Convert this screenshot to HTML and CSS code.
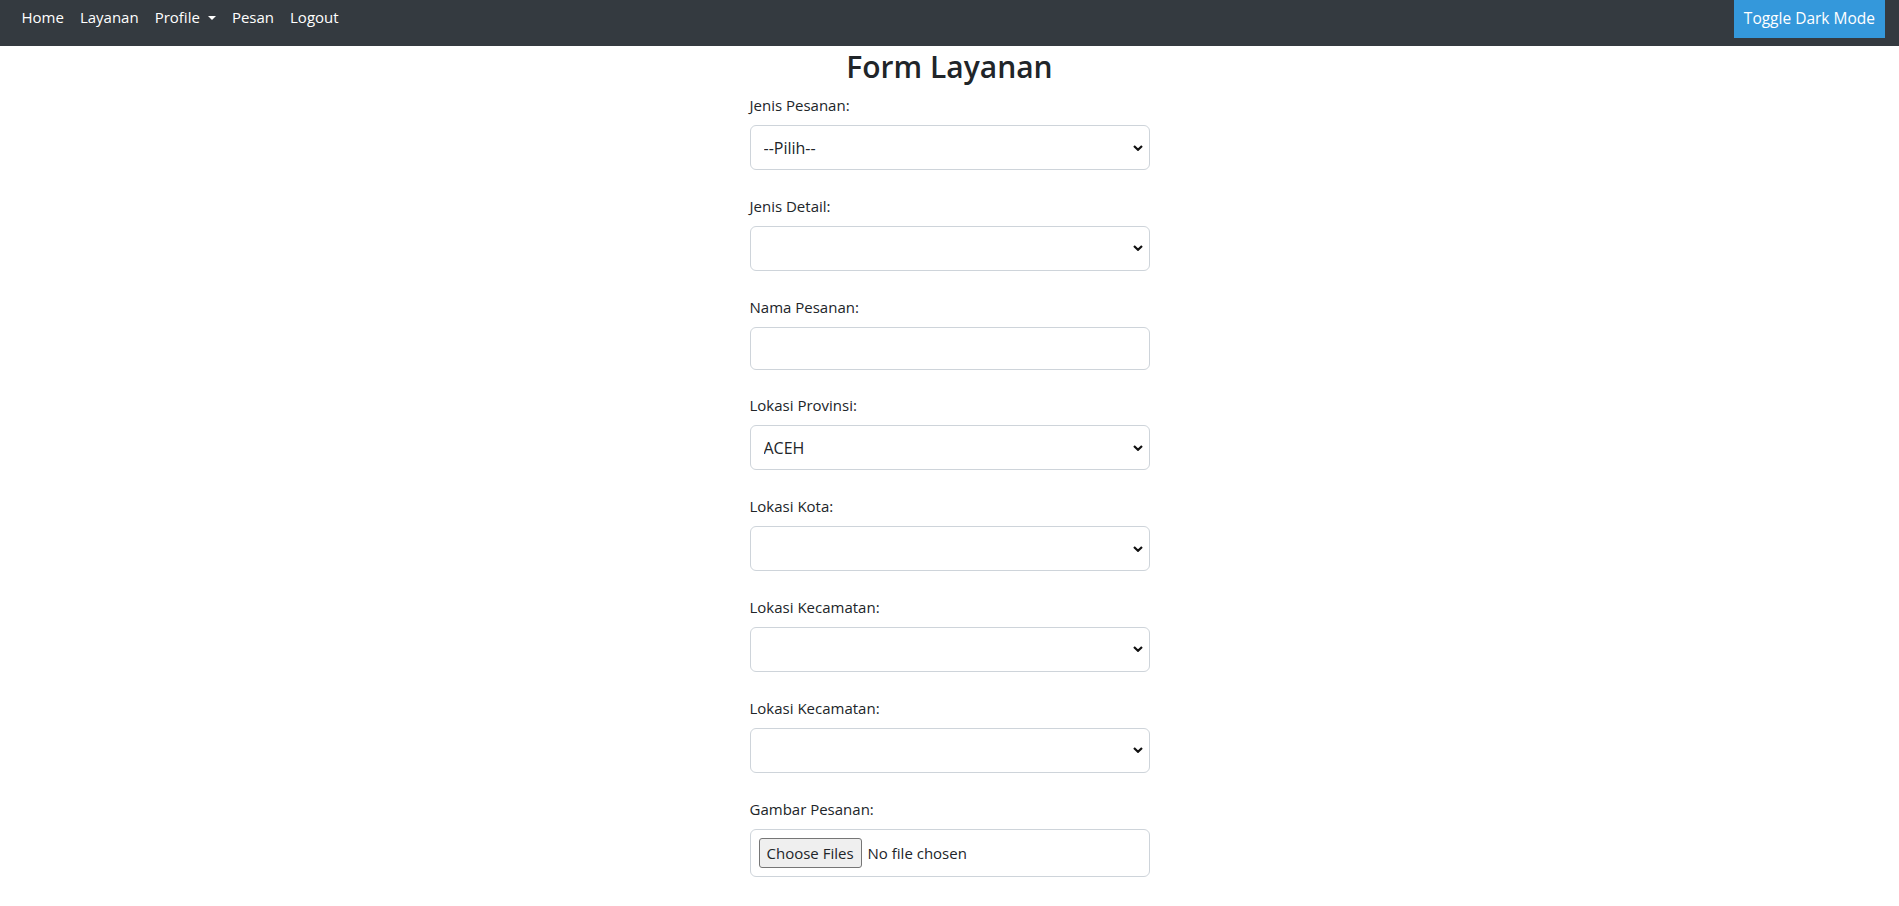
FILE: index.html
```html
<!DOCTYPE html>
<html lang="id">
<head>
<meta charset="utf-8">
<title>Form Layanan</title>
<link rel="stylesheet" href="styles.css">
</head>
<body>
<nav class="navbar">
  <ul class="nav-links">
    <li><a class="nav-link" href="#">Home</a></li>
    <li><a class="nav-link" href="#">Layanan</a></li>
    <li><a class="nav-link" href="#">Profile<span class="caret"></span></a></li>
    <li><a class="nav-link" href="#">Pesan</a></li>
    <li><a class="nav-link" href="#">Logout</a></li>
  </ul>
  <button class="toggle-btn" type="button">Toggle Dark Mode</button>
</nav>
<main class="form-wrap">
  <h1 class="form-title">Form Layanan</h1>
  <form class="form">
    <div class="group">
      <label class="label" for="jenis">Jenis Pesanan:</label>
      <select class="field select" id="jenis"><option>--Pilih--</option></select>
    </div>
    <div class="group">
      <label class="label" for="detail">Jenis Detail:</label>
      <select class="field select" id="detail"><option></option></select>
    </div>
    <div class="group">
      <label class="label" for="nama">Nama Pesanan:</label>
      <input class="field input" id="nama" type="text">
    </div>
    <div class="group">
      <label class="label" for="prov">Lokasi Provinsi:</label>
      <select class="field select" id="prov"><option>ACEH</option></select>
    </div>
    <div class="group">
      <label class="label" for="kota">Lokasi Kota:</label>
      <select class="field select" id="kota"><option></option></select>
    </div>
    <div class="group">
      <label class="label" for="kec">Lokasi Kecamatan:</label>
      <select class="field select" id="kec"><option></option></select>
    </div>
    <div class="group">
      <label class="label" for="kec2">Lokasi Kecamatan:</label>
      <select class="field select" id="kec2"><option></option></select>
    </div>
    <div class="group">
      <label class="label" for="gambar">Gambar Pesanan:</label>
      <input class="field file" id="gambar" type="file" multiple>
    </div>
  </form>
</main>
</body>
</html>
```
FILE: styles.css
```css
* { box-sizing: border-box; }
html, body { margin: 0; padding: 0; }
body {
  font-family: "Open Sans", "Noto Sans", "Liberation Sans", sans-serif;
  color: #212529;
  background: #fff;
  overflow: hidden;
}
.navbar {
  display: flex;
  justify-content: space-between;
  align-items: flex-start;
  height: 46px;
  background: #343a40;
  padding: 0 14px 0 13.5px;
}
.nav-links {
  list-style: none;
  margin: 0;
  padding: 5px 0 0;
  display: flex;
}
.nav-link {
  display: block;
  color: #fff;
  text-decoration: none;
  font-size: 15px;
  line-height: 24px;
  padding: 0 8px;
}
.caret {
  display: inline-block;
  margin-left: 8px;
  vertical-align: 3px;
  border-top: 4.5px solid #fff;
  border-left: 4px solid transparent;
  border-right: 4px solid transparent;
}
.toggle-btn {
  background: #3498db;
  color: #fff;
  border: 0;
  font-family: inherit;
  font-size: 15.5px;
  line-height: 26px;
  height: 38px;
  padding: 5px 10px 7px;
  margin: 0;
}
.form-wrap {
  width: 400px;
  margin: 0 auto;
}
.form-title {
  text-align: center;
  font-size: 30px;
  font-weight: 600;
  line-height: 36px;
  margin: 3px -40px 9px;
}
.form { margin: 0; }
.group { margin-bottom: 24.8px; }
.label {
  display: block;
  font-size: 15px;
  line-height: 22px;
  margin-bottom: 9px;
}
.field {
  display: block;
  width: 100%;
  border: 1px solid #ced4da;
  border-radius: 6px;
  background-color: #fff;
  font-family: inherit;
  font-size: 16px;
  color: #212529;
  margin: 0;
}
.select {
  height: 45px;
  padding: 0 30px 0 13px;
  -webkit-appearance: none;
  appearance: none;
  background-image: url("data:image/svg+xml,%3Csvg xmlns='http://www.w3.org/2000/svg' width='10' height='6' viewBox='0 0 10 6'%3E%3Cpolyline points='1,1 5,4.8 9,1' fill='none' stroke='%23111' stroke-width='2.2'/%3E%3C/svg%3E");
  background-repeat: no-repeat;
  background-position: right 6px center;
  background-size: 10px 6px;
}
.input {
  height: 43px;
  padding: 0 13px;
}
.file {
  height: 48px;
  padding: 8px;
  line-height: 30px;
  font-size: 15px;
}
.file::file-selector-button {
  font-family: inherit;
  font-size: 15px;
  color: #212529;
  background: #efefef;
  border: 1px solid #767676;
  border-radius: 3px;
  height: 30px;
  padding: 0 7px;
  margin-right: 6px;
}
```
